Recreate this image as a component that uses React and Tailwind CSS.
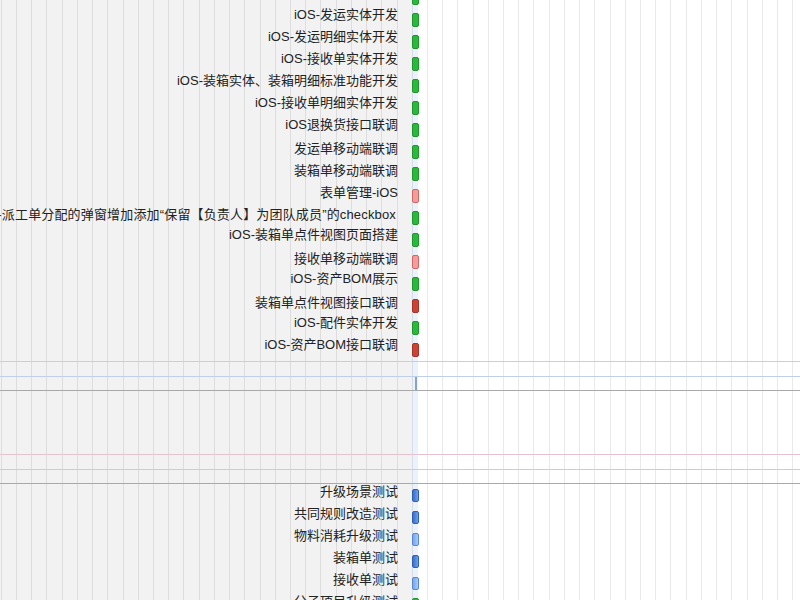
const bars = {
  green: "h-[14px] border-[#1d962c] bg-[#2ab93d]",
  pink: "h-[14px] border-[#cf6767] bg-[#f49c9c]",
  red: "h-[14px] border-[#a3342a] bg-[#cc4336]",
  blue: "h-[13px] border-[#2d5fb5] bg-[linear-gradient(90deg,#3c6fc6,#6b9ff0)]",
  lightBlue: "h-[13px] border-[#5587d4] bg-[linear-gradient(90deg,#7aa6ea,#a9c9f7)]",
};

// text with "iOS" first sits a bit higher than the others in the original
const lift = {
  ios: "-translate-y-[5px]",
  cjk: "-translate-y-[3px]",
};

const topTasks = [
  { name: "", color: "green", up: "ios" },
  { name: "iOS-发运实体开发", color: "green", up: "ios" },
  { name: "iOS-发运明细实体开发", color: "green", up: "ios" },
  { name: "iOS-接收单实体开发", color: "green", up: "ios" },
  { name: "iOS-装箱实体、装箱明细标准功能开发", color: "green", up: "ios" },
  { name: "iOS-接收单明细实体开发", color: "green", up: "ios" },
  { name: "iOS退换货接口联调", color: "green", up: "ios" },
  { name: "发运单移动端联调", color: "green", up: "cjk" },
  { name: "装箱单移动端联调", color: "green", up: "cjk" },
  { name: "表单管理-iOS", color: "pink", up: "cjk" },
  { name: "iOS-派工单分配的弹窗增加添加“保留【负责人】为团队成员”的checkbox", color: "green", up: "cjk", wide: true },
  { name: "iOS-装箱单点件视图页面搭建", color: "green", up: "ios" },
  { name: "接收单移动端联调", color: "pink", up: "cjk" },
  { name: "iOS-资产BOM展示", color: "green", up: "ios" },
  { name: "装箱单点件视图接口联调", color: "red", up: "cjk" },
  { name: "iOS-配件实体开发", color: "green", up: "ios" },
  { name: "iOS-资产BOM接口联调", color: "red", up: "ios" },
];

const testTasks = [
  { name: "升级场景测试", color: "blue", up: "cjk" },
  { name: "共同规则改造测试", color: "blue", up: "cjk" },
  { name: "物料消耗升级测试", color: "lightBlue", up: "cjk" },
  { name: "装箱单测试", color: "blue", up: "cjk" },
  { name: "接收单测试", color: "lightBlue", up: "cjk" },
  { name: "分子项目升级测试", color: "green", up: "cjk" },
];

const TaskRow = ({ task }) => (
  <div className="flex h-[22px] items-center">
    <div
      className={`flex w-[411px] shrink-0 justify-end whitespace-nowrap ${task.wide ? "pr-[15px] tracking-[0.16px]" : "pr-[13px]"}`}
    >
      <span className={`text-[13px] leading-[22px] text-[#222] ${lift[task.up]}`}>{task.name}</span>
    </div>
    <div className={`ml-px w-[7px] rounded-[2px] border ${bars[task.color]}`} />
  </div>
);

const Divider = () => (
  <>
    <div className="h-px bg-[#e6c2cc]" />
    <div className="h-[14px]" />
    <div className="h-px bg-[#bfcee9]" />
  </>
);

export default function App() {
  return (
    <div className="h-[600px] w-[800px] overflow-hidden font-['Liberation_Sans','Noto_Sans_CJK_SC',sans-serif] bg-[image:repeating-linear-gradient(90deg,transparent_0_0.78px,rgba(0,0,0,0.085)_0.78px_1.78px,transparent_1.78px_15.22px),linear-gradient(90deg,#f2f2f2_0_411px,#eaf2fc_411px_418px,#fff_418px)]">
      <div className="-mt-[13px]">
        {topTasks.map((t, i) => (
          <TaskRow key={i} task={t} />
        ))}
      </div>

      <Divider />
      <div className="flex h-[13px]">
        <div className="w-[415px] shrink-0" />
        <div className="w-[2px] bg-[#8aa2c6]" />
      </div>
      <div className="h-px bg-[#a9a9a9]" />

      <div className="h-[63px]" />

      <Divider />
      <div className="h-[13px]" />
      <div className="h-px bg-[#a9a9a9]" />

      <div>
        {testTasks.map((t, i) => (
          <TaskRow key={i} task={t} />
        ))}
      </div>
    </div>
  );
}
